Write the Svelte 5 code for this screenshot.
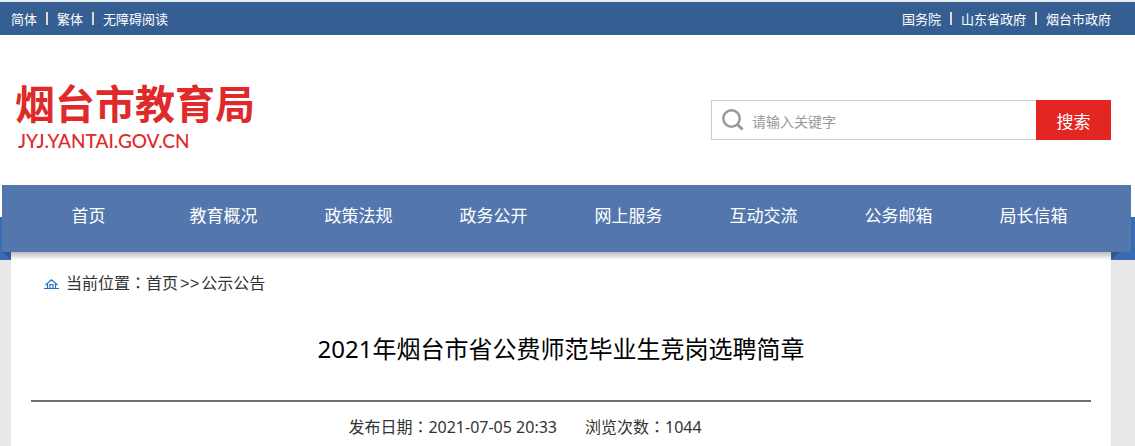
<script lang="ts">
	const versions = ['简体', '繁体', '无障碍阅读'];
	const governments = ['国务院', '山东省政府', '烟台市政府'];
	const menu = [
		'首页',
		'教育概况',
		'政策法规',
		'政务公开',
		'网上服务',
		'互动交流',
		'公务邮箱',
		'局长信箱'
	];

	let keyword = $state('');
</script>

<svelte:head>
	<title>烟台市教育局</title>
</svelte:head>

<div class="page">
	<div class="topbar">
		<ul class="links">
			{#each versions as v}
				<li><a href="/">{v}</a></li>
			{/each}
		</ul>
		<ul class="links">
			{#each governments as g}
				<li><a href="/">{g}</a></li>
			{/each}
		</ul>
	</div>

	<header class="header">
		<a class="logo" href="/">
			<span class="logo-name">烟台市教育局</span>
			<span class="logo-domain">JYJ.YANTAI.GOV.CN</span>
		</a>
		<form class="search" onsubmit={(e) => e.preventDefault()}>
			<label class="search-box">
				<svg width="22" height="22" viewBox="0 0 22 22" aria-hidden="true">
					<circle cx="9.5" cy="9.5" r="8.2" fill="none" stroke="#999" stroke-width="2.5" />
					<path d="M15.2 15.2 L20.5 20.5" stroke="#999" stroke-width="3" />
				</svg>
				<input type="text" placeholder="请输入关键字" aria-label="请输入关键字" bind:value={keyword} />
			</label>
			<button type="submit">搜索</button>
		</form>
	</header>

	<div class="main">
		<nav class="nav">
			{#each menu as item}
				<a href="/">{item}</a>
			{/each}
		</nav>

		<article class="content">
			<div class="crumbs">
				<svg width="15" height="10" viewBox="0 0 15 10" aria-hidden="true">
					<path
						d="M0 9.5 H15 M1.5 6 L7.5 0.8 L13.5 6 M3.5 5 V9 M11.5 5 V9 M6 9 V5.5 H9 V9"
						fill="none"
						stroke="#1c74c9"
						stroke-width="1.2"
					/>
				</svg>
				<span>当前位置<span class="colon">：</span><a href="/">首页</a><span class="arrows">&gt;&gt;</span><a href="/">公示公告</a></span>
			</div>
			<h1>2021年烟台市省公费师范毕业生竞岗选聘简章</h1>
			<div class="meta">
				<span>发布日期<span class="colon">：</span>2021-07-05 20:33</span>
				<span>浏览次数<span class="colon">：</span>1044</span>
			</div>
		</article>
	</div>
</div>

<style>
	:global(body) {
		margin: 0;
		background: #fff;
	}
	.page {
		display: flex;
		flex-direction: column;
		min-height: 100vh;
		font-family: 'Noto Sans', 'Noto Sans CJK SC', sans-serif;
		font-size: 16px;
		color: #333;
	}
	a {
		color: inherit;
		text-decoration: none;
	}
	.topbar {
		display: flex;
		justify-content: space-between;
		box-sizing: border-box;
		height: 35px;
		padding: 0 24px 0 11px;
		border-top: 2px solid #e9edf2;
		background: #355f93;
		color: #fff;
		font-size: 13px;
		line-height: 32px;
	}
	.links {
		display: flex;
		margin: 0;
		padding: 0;
		list-style: none;
	}
	.links li {
		display: flex;
		align-items: center;
	}
	.links li + li::before {
		content: '';
		width: 2px;
		height: 13px;
		margin: 0 9px;
		background: #dcd9d0;
	}
	.header {
		display: flex;
		justify-content: space-between;
		align-items: center;
		height: 150px;
		padding: 0 24px 0 15px;
	}
	.logo {
		display: flex;
		flex-direction: column;
		padding-top: 14px;
		color: #de2a2a;
	}
	.logo-name {
		font-size: 40px;
		font-weight: 700;
		line-height: 48px;
	}
	.logo-domain {
		padding-left: 3px;
		font-family: Lato, 'Noto Sans', sans-serif;
		font-size: 19px;
		font-weight: 500;
		line-height: 26px;
	}
	.search {
		display: flex;
		width: 400px;
		height: 40px;
		padding-top: 20px;
	}
	.search-box {
		flex: 1;
		display: flex;
		align-items: center;
		gap: 8px;
		padding-left: 10px;
		border: 1px solid #ccc;
		border-right: 0;
	}
	.search-box input {
		flex: 1;
		min-width: 0;
		height: 36px;
		padding: 2px 0 0;
		border: 0;
		outline: 0;
		background: none;
		font-family: inherit;
		font-size: 14px;
	}
	.search-box input::placeholder {
		color: #999;
	}
	.search button {
		width: 75px;
		padding: 0;
		border: 0;
		background: #e32621;
		color: #fff;
		font-family: inherit;
		font-size: 17px;
		cursor: pointer;
	}
	.main {
		flex: 1;
		display: flex;
		flex-direction: column;
		background: linear-gradient(#fff 32px, #3b6cb3 32px, #3b6cb3 75px, #e8e8e8 75px);
	}
	.nav {
		position: relative;
		display: grid;
		grid-template-columns: repeat(8, 1fr);
		margin: 0 4px 0 2px;
		padding: 0 30px 0 19px;
		background: #5377ad;
		color: #fff;
		font-size: 17px;
		line-height: 62px;
		height: 67px;
		text-align: center;
	}
	/* folded ribbon corners under the menu */
	.nav::before,
	.nav::after {
		content: '';
		position: absolute;
		top: 100%;
		width: 9px;
		height: 8px;
		background: #2f5a96;
	}
	.nav::before {
		left: 0;
		clip-path: polygon(0 0, 100% 0, 100% 100%);
	}
	.nav::after {
		right: 11px;
		clip-path: polygon(0 0, 100% 0, 0 100%);
	}
	.content {
		flex: 1;
		margin: 0 24px 0 11px;
		padding: 0 20px;
		background: linear-gradient(#bbb, #fff 8px);
	}
	.crumbs {
		display: flex;
		align-items: center;
		gap: 7px;
		padding: 18px 0 0 13px;
		line-height: 24px;
	}
	/* the full-width colon is centred in its cell */
	.colon {
		font-family: 'Noto Sans CJK TC', sans-serif;
	}
	.arrows {
		padding: 0 2px;
		font-family: 'Liberation Mono', monospace;
	}
	h1 {
		margin: 0;
		padding: 34px 0 33px;
		border-bottom: 2px solid #707070;
		color: #000;
		font-size: 24px;
		font-weight: 400;
		line-height: 36px;
		text-align: center;
	}
	.meta {
		display: flex;
		justify-content: center;
		gap: 28px;
		padding: 12px 72px 12px 0;
		line-height: 24px;
	}
</style>
